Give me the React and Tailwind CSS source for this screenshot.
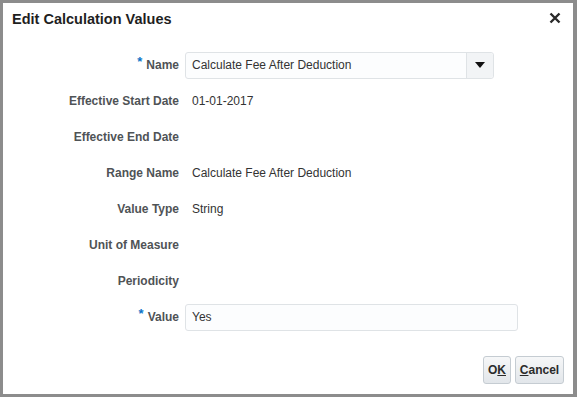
import React from "react";

const font = { fontFamily: '"Liberation Sans", Arial, sans-serif' };

function Row({ label, required, children }) {
  return (
    <div className="flex h-[36px] items-center">
      <div className="w-[176px] shrink-0 text-right text-[12px] font-bold text-[#4f5356]">
        {required && <span className="relative top-[-3px] mr-[4px] text-[13px] text-[#0b73c7]">*</span>}
        {label}
      </div>
      <div className="ml-[6px] flex-1 text-[12px] text-[#333333]">{children}</div>
    </div>
  );
}

export default function App() {
  return (
    <div style={font} className="h-[397px] w-[577px] bg-[#8c8c8c] pb-[3px] pl-[3px] pr-[4px] pt-[3px]">
      <div className="flex h-full w-full flex-col bg-white">
        <div className="flex h-[44px] items-start justify-between pl-[9px] pr-[12px] pt-[6px]">
          <div className="text-[14.5px] font-bold text-[#1f1f1f]">Edit Calculation Values</div>
          <svg width="12" height="12" viewBox="0 0 12 12" className="mt-[3px]">
            <path d="M1.5 1.5 L10.5 10.5 M10.5 1.5 L1.5 10.5" stroke="#2a2a2a" strokeWidth="2.4" />
          </svg>
        </div>
        <div className="flex flex-col">
          <Row label="Name" required>
            <div className="flex h-[27px] w-[309px] items-stretch rounded-[3px] border border-[#dfe3e6] bg-[#fcfdfe]">
              <div className="flex flex-1 items-center pl-[6px]">Calculate Fee After Deduction</div>
              <div className="flex w-[27px] items-center justify-center rounded-r-[3px] border-l border-[#dfe3e6] bg-[#f2f4f6]">
                <svg width="10" height="6" viewBox="0 0 10 6">
                  <path d="M0 0 L10 0 L5 6 Z" fill="#111" />
                </svg>
              </div>
            </div>
          </Row>
          <Row label="Effective Start Date">
            <span className="pl-[7px]">01-01-2017</span>
          </Row>
          <Row label="Effective End Date" />
          <Row label="Range Name">
            <span className="pl-[7px]">Calculate Fee After Deduction</span>
          </Row>
          <Row label="Value Type">
            <span className="pl-[7px]">String</span>
          </Row>
          <Row label="Unit of Measure" />
          <Row label="Periodicity" />
          <Row label="Value" required>
            <div className="flex h-[27px] w-[333px] items-center rounded-[3px] border border-[#dfe3e6] bg-[#fcfdfe] pl-[6px]">
              Yes
            </div>
          </Row>
        </div>
        <div className="mt-[21px] flex justify-end gap-[4px] pr-[9px]">
          <button className="flex h-[28px] w-[28px] items-center justify-center rounded-[3px] border border-[#c5ccd2] bg-gradient-to-b from-[#f6f7f8] to-[#e2e6ea] text-[12px] font-bold text-[#2b2b2b]">
            <span>O<span className="underline">K</span></span>
          </button>
          <button className="flex h-[28px] w-[49px] items-center justify-center rounded-[3px] border border-[#c5ccd2] bg-gradient-to-b from-[#f6f7f8] to-[#e2e6ea] text-[12px] font-bold text-[#2b2b2b]">
            <span><span className="underline">C</span>ancel</span>
          </button>
        </div>
      </div>
    </div>
  );
}
